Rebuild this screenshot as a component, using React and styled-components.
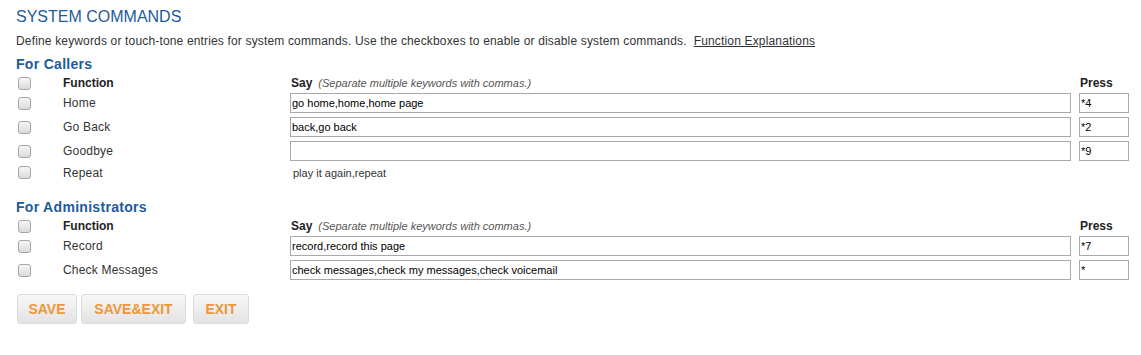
import React from "react";
import styled, { createGlobalStyle } from "styled-components";

const Global = createGlobalStyle`
  html, body { margin: 0; padding: 0; background: #fff; }
  body { font-family: "Liberation Sans", Arial, sans-serif; color: #333; }
`;

const Page = styled.div`
  padding: 7px 0 0 16px;
  width: 1125px;
`;

const Title = styled.h1`
  margin: 0;
  font-size: 16px;
  line-height: 20px;
  font-weight: normal;
  color: #1d5b9c;
`;

const Desc = styled.p`
  margin: 6px 0 0;
  font-size: 12px;
  line-height: 16px;
  letter-spacing: 0.16px;
  color: #333;
`;

const Link = styled.a`
  color: #333;
  text-decoration: underline;
  margin-left: 7px;
`;

const Section = styled.section`
  margin-top: ${(p) => p.$mt}px;
`;

const Heading = styled.h2`
  margin: 0 0 3px;
  padding-top: 2px;
  font-size: 14px;
  line-height: 15px;
  font-weight: bold;
  letter-spacing: 0.3px;
  color: #1d5b9c;
`;

const Row = styled.div`
  display: grid;
  grid-template-columns: 47px 227px 789px 50px;
  align-items: center;
  height: ${(p) => p.$h}px;
  font-size: 12px;
`;

const Check = styled.input.attrs({ type: "checkbox" })`
  appearance: none;
  -webkit-appearance: none;
  margin: 0 0 0 2px;
  width: 13px;
  height: 13px;
  border: 1px solid #a6a6a6;
  border-radius: 3px;
  background: linear-gradient(#f7f7f7, #dadada);
  box-sizing: border-box;
`;

const HeadCell = styled.div`
  font-weight: bold;
  color: #222;
  padding-left: ${(p) => p.$pl || 0}px;
  white-space: nowrap;
`;

const Hint = styled.span`
  font-weight: normal;
  font-style: italic;
  font-size: 11px;
  color: #555;
  margin-left: 6px;
`;

const Label = styled.div`
  color: #333;
  font-size: 12px;
  letter-spacing: 0.2px;
`;

const TextBox = styled.input.attrs({ type: "text" })`
  box-sizing: border-box;
  width: ${(p) => p.$w}px;
  height: 20px;
  margin: 0;
  padding: 0 1px;
  border: 1px solid #a9a9a9;
  border-radius: 0;
  font-family: "Liberation Sans", Arial, sans-serif;
  font-size: 11px;
  color: #000;
  background: #fff;
  outline: none;
`;

const Plain = styled.div`
  font-size: 11px;
  color: #333;
  padding-left: 3px;
`;

const Buttons = styled.div`
  display: flex;
  margin: 12px 0 0 1px;
`;

const Btn = styled.button`
  box-sizing: border-box;
  width: ${(p) => p.$w}px;
  height: 30px;
  padding: 0;
  margin-right: ${(p) => p.$mr || 0}px;
  border: 1px solid #dcdcdc;
  border-radius: 3px;
  background: linear-gradient(#f7f7f7, #e3e3e3);
  color: #f0963a;
  font-family: "Liberation Sans", Arial, sans-serif;
  font-weight: bold;
  font-size: 14px;
  text-align: center;
  cursor: pointer;
`;

const callers = [
  { name: "Home", say: "go home,home,home page", press: "*4" },
  { name: "Go Back", say: "back,go back", press: "*2" },
  { name: "Goodbye", say: "", press: "*9" },
  { name: "Repeat", plain: "play it again,repeat" },
];

const admins = [
  { name: "Record", say: "record,record this page", press: "*7" },
  { name: "Check Messages", say: "check messages,check my messages,check voicemail", press: "*" },
];

function Header() {
  return (
    <Row $h={16}>
      <Check />
      <HeadCell>Function</HeadCell>
      <HeadCell $pl={1}>
        Say<Hint>(Separate multiple keywords with commas.)</Hint>
      </HeadCell>
      <HeadCell $pl={1}>Press</HeadCell>
    </Row>
  );
}

function CmdRow({ item }) {
  if (item.plain) {
    return (
      <Row $h={19}>
        <Check />
        <Label>{item.name}</Label>
        <Plain>{item.plain}</Plain>
        <div />
      </Row>
    );
  }
  return (
    <Row $h={24}>
      <Check />
      <Label>{item.name}</Label>
      <TextBox $w={781} defaultValue={item.say} />
      <TextBox $w={50} defaultValue={item.press} />
    </Row>
  );
}

export default function App() {
  return (
    <>
      <Global />
      <Page>
        <Title>SYSTEM COMMANDS</Title>
        <Desc>
          Define keywords or touch-tone entries for system commands. Use the checkboxes to enable or disable system commands.
          <Link href="#">Function Explanations</Link>
        </Desc>
        <Section $mt={6}>
          <Heading>For Callers</Heading>
          <Header />
          {callers.map((c) => (
            <CmdRow key={c.name} item={c} />
          ))}
        </Section>
        <Section $mt={16}>
          <Heading>For Administrators</Heading>
          <Header />
          {admins.map((c) => (
            <CmdRow key={c.name} item={c} />
          ))}
        </Section>
        <Buttons>
          <Btn $w={60} $mr={4}>SAVE</Btn>
          <Btn $w={105} $mr={7}>SAVE&amp;EXIT</Btn>
          <Btn $w={56}>EXIT</Btn>
        </Buttons>
      </Page>
    </>
  );
}
